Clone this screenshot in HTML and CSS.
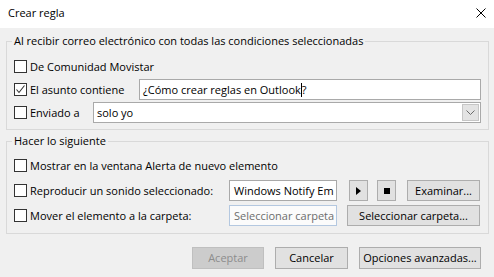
FILE: index.html
```html
<!DOCTYPE html>
<html lang="es">
<head>
<meta charset="utf-8">
<title>Crear regla</title>
<link rel="stylesheet" href="styles.css">
</head>
<body>
<div class="win">
  <div class="titlebar">
    <span class="title">Crear regla</span>
    <svg class="close" width="10" height="10" viewBox="0 0 10 10"><path d="M0.5 0.5L9.5 9.5M9.5 0.5L0.5 9.5" stroke="#000" stroke-width="1" fill="none"/></svg>
  </div>
  <div class="body">
    <fieldset class="group g1">
      <legend>Al recibir correo electrónico con todas las condiciones seleccionadas</legend>
      <div class="row">
        <span class="cb"></span><span class="lbl">De Comunidad Movistar</span>
      </div>
      <div class="row">
        <span class="cb"><svg width="11" height="11" viewBox="0 0 11 11"><path d="M1.5 5.5L4 8.5L9.5 1.5" stroke="#333" stroke-width="1.1" fill="none"/></svg></span><span class="lbl w-asunto">El asunto contiene</span>
        <div class="tb grow">¿Cómo crear reglas en Outlook<span class="caret"></span>?</div>
      </div>
      <div class="row">
        <span class="cb"></span><span class="lbl w-env">Enviado a</span>
        <div class="tb combo grow"><span class="grow">solo yo</span><span class="arrow"><svg width="9" height="5" viewBox="0 0 9 5"><path d="M0.5 0.5L4.5 4.5L8.5 0.5" stroke="#6b6b6b" stroke-width="1" fill="none"/></svg></span></div>
      </div>
    </fieldset>
    <fieldset class="group g2">
      <legend>Hacer lo siguiente</legend>
      <div class="row">
        <span class="cb"></span><span class="lbl">Mostrar en la ventana Alerta de nuevo elemento</span>
      </div>
      <div class="row">
        <span class="cb"></span><span class="lbl w-act">Reproducir un sonido seleccionado:</span>
        <div class="tb field">Windows Notify Em</div>
        <button class="btn icon play"><svg width="5" height="8" viewBox="0 0 5 8"><path d="M0 0L5 4L0 8Z" fill="#000"/></svg></button>
        <button class="btn icon stop"><span class="sq"></span></button>
        <button class="btn exam">Examinar...</button>
      </div>
      <div class="row">
        <span class="cb"></span><span class="lbl w-act">Mover el elemento a la carpeta:</span>
        <div class="tb field ro">Seleccionar carpeta</div>
        <button class="btn selc">Seleccionar carpeta...</button>
      </div>
    </fieldset>
  </div>
  <div class="footer">
    <button class="btn disabled w-ok">Aceptar</button>
    <button class="btn w-cancel">Cancelar</button>
    <button class="btn w-adv">Opciones avanzadas...</button>
  </div>
</div>
</body>
</html>
```
FILE: styles.css
```css
html, body {
  margin: 0;
  padding: 0;
}
body {
  width: 494px;
  height: 277px;
  overflow: hidden;
  font-family: "Open Sans", "Noto Sans", sans-serif;
  font-size: 11px;
  color: #000;
  background: #f0f0f0;
}
.win {
  width: 494px;
  height: 277px;
  display: flex;
  flex-direction: column;
}
.titlebar {
  height: 28px;
  background: #fff;
  display: flex;
  align-items: center;
  justify-content: space-between;
  padding: 0 8px 0 8px;
  box-sizing: border-box;
}
.title {
  line-height: 16px;
  margin-top: -2px;
}
.close {
  margin-top: -2px;
}
.body {
  padding: 0 5px 0 6px;
}
.group {
  margin: 0;
  border: 1px solid #d9d9d9;
  padding: 7px 7px 6px 5px;
  min-width: 0;
}
.group legend {
  padding: 0 2px;
  line-height: 16px;
}
.g1 {
  margin-top: 5px;
}
.g2 {
  margin-top: 3px;
  padding-top: 6px;
  padding-bottom: 7px;
}
.row {
  display: flex;
  align-items: center;
  height: 21px;
}
.g1 .row + .row {
  margin-top: 2px;
}
.g2 .row + .row {
  margin-top: 4px;
}
.cb {
  width: 13px;
  height: 13px;
  box-sizing: border-box;
  border: 1px solid #333;
  background: #fff;
  margin-left: 2px;
  flex: none;
  display: flex;
  align-items: center;
  justify-content: center;
}
.lbl {
  padding-left: 3px;
  white-space: nowrap;
  flex: none;
  line-height: 16px;
}
.w-asunto { width: 112px; box-sizing: border-box; }
.w-env { width: 66px; box-sizing: border-box; }
.w-act { width: 202px; box-sizing: border-box; }
.grow {
  flex: 1;
  min-width: 0;
}
.tb {
  height: 21px;
  box-sizing: border-box;
  border: 1px solid #a9a9a9;
  background: #fff;
  padding-left: 3px;
  display: flex;
  align-items: center;
  white-space: nowrap;
  overflow: hidden;
}
.caret {
  display: inline-block;
  width: 1px;
  height: 14px;
  background: #000;
}
.combo {
  padding-right: 1px;
}
.arrow {
  width: 17px;
  height: 17px;
  box-sizing: border-box;
  background: #e3e3e3;
  border: 1px solid #c6c6c6;
  display: flex;
  align-items: center;
  justify-content: center;
  flex: none;
}
.field {
  width: 108px;
  flex: none;
  padding-left: 4px;
}
.field.ro {
  border-color: #b4c8e0;
  color: #6d6d6d;
  background: #fbfbfb;
}
.btn {
  font: inherit;
  color: #000;
  background: #e1e1e1;
  border: 1px solid #adadad;
  height: 21px;
  padding: 0;
  margin: 0;
  box-sizing: border-box;
  display: flex;
  align-items: center;
  justify-content: center;
  flex: none;
  line-height: 16px;
  white-space: nowrap;
}
.icon {
  width: 19px;
}
.play { margin-left: 12px; }
.stop { margin-left: 9px; }
.sq {
  width: 6px;
  height: 6px;
  background: #000;
}
.exam {
  width: 73px;
  margin-left: 11px;
}
.selc {
  width: 133px;
  margin-left: 10px;
}
.footer {
  display: flex;
  justify-content: flex-end;
  gap: 11px;
  padding-right: 13px;
  margin-top: 13px;
}
.footer .btn {
  height: 22px;
}
.w-ok { width: 72px; }
.w-cancel { width: 73px; }
.w-adv { width: 122px; }
.disabled {
  background: #cccccc;
  border-color: #bfbfbf;
  color: #8d8d8d;
}
```
